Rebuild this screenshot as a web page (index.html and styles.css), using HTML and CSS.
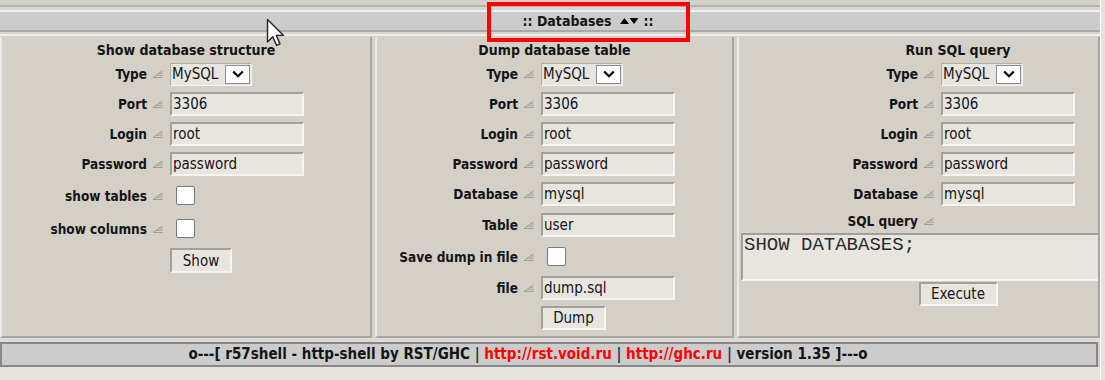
FILE: index.html
```html
<!DOCTYPE html>
<html>
<head>
<meta charset="utf-8">
<title>r57shell - Databases</title>
<link rel="stylesheet" href="styles.css">
</head>
<body>
<div class="screen">
  <div class="page">
    <div class="hdr-outer">
      <div class="hdr-frame">
        <div class="hdr">
          <span>:: Databases</span>
          <svg class="arrows" viewBox="0 0 19 8" width="19" height="8"><polygon points="0,7 9,7 4.5,1" fill="#000"/><polygon points="9.5,1 18.5,1 14,7" fill="#000"/></svg>
          <span>::</span>
        </div>
      </div>
    </div>

    <div class="cols">
      <div class="col">
        <div class="form f1">
          <div class="title">Show database structure</div>

          <div class="lbl">Type<svg class="ic" viewBox="0 0 11 8"><path d="M1 7.5H10.5M4 5.3H10.5M7 3.1H10.5M1 7.5L10.5 0.8" stroke="#a19e98" stroke-width="1" fill="none"/></svg></div>
          <div class="fld"><div class="sel"><span class="sel-txt">MySQL</span><span class="sel-btn"><svg viewBox="0 0 12 8" width="12" height="8"><path d="M1.2 1.5L6 6.3L10.8 1.5" stroke="#000" stroke-width="2.2" fill="none"/></svg></span></div></div>

          <div class="lbl">Port<svg class="ic" viewBox="0 0 11 8"><path d="M1 7.5H10.5M4 5.3H10.5M7 3.1H10.5M1 7.5L10.5 0.8" stroke="#a19e98" stroke-width="1" fill="none"/></svg></div>
          <div class="fld"><input class="inp" value="3306"></div>

          <div class="lbl">Login<svg class="ic" viewBox="0 0 11 8"><path d="M1 7.5H10.5M4 5.3H10.5M7 3.1H10.5M1 7.5L10.5 0.8" stroke="#a19e98" stroke-width="1" fill="none"/></svg></div>
          <div class="fld"><input class="inp" value="root"></div>

          <div class="lbl">Password<svg class="ic" viewBox="0 0 11 8"><path d="M1 7.5H10.5M4 5.3H10.5M7 3.1H10.5M1 7.5L10.5 0.8" stroke="#a19e98" stroke-width="1" fill="none"/></svg></div>
          <div class="fld"><input class="inp" value="password"></div>

          <div class="lbl">show tables<svg class="ic" viewBox="0 0 11 8"><path d="M1 7.5H10.5M4 5.3H10.5M7 3.1H10.5M1 7.5L10.5 0.8" stroke="#a19e98" stroke-width="1" fill="none"/></svg></div>
          <div class="fld"><input type="checkbox" class="chk"></div>

          <div class="lbl">show columns<svg class="ic" viewBox="0 0 11 8"><path d="M1 7.5H10.5M4 5.3H10.5M7 3.1H10.5M1 7.5L10.5 0.8" stroke="#a19e98" stroke-width="1" fill="none"/></svg></div>
          <div class="fld"><input type="checkbox" class="chk"></div>

          <div class="fld c2"><button class="btn b-show">Show</button></div>
        </div>
      </div>

      <div class="col">
        <div class="form f2">
          <div class="title">Dump database table</div>

          <div class="lbl">Type<svg class="ic" viewBox="0 0 11 8"><path d="M1 7.5H10.5M4 5.3H10.5M7 3.1H10.5M1 7.5L10.5 0.8" stroke="#a19e98" stroke-width="1" fill="none"/></svg></div>
          <div class="fld"><div class="sel"><span class="sel-txt">MySQL</span><span class="sel-btn"><svg viewBox="0 0 12 8" width="12" height="8"><path d="M1.2 1.5L6 6.3L10.8 1.5" stroke="#000" stroke-width="2.2" fill="none"/></svg></span></div></div>

          <div class="lbl">Port<svg class="ic" viewBox="0 0 11 8"><path d="M1 7.5H10.5M4 5.3H10.5M7 3.1H10.5M1 7.5L10.5 0.8" stroke="#a19e98" stroke-width="1" fill="none"/></svg></div>
          <div class="fld"><input class="inp" value="3306"></div>

          <div class="lbl">Login<svg class="ic" viewBox="0 0 11 8"><path d="M1 7.5H10.5M4 5.3H10.5M7 3.1H10.5M1 7.5L10.5 0.8" stroke="#a19e98" stroke-width="1" fill="none"/></svg></div>
          <div class="fld"><input class="inp" value="root"></div>

          <div class="lbl">Password<svg class="ic" viewBox="0 0 11 8"><path d="M1 7.5H10.5M4 5.3H10.5M7 3.1H10.5M1 7.5L10.5 0.8" stroke="#a19e98" stroke-width="1" fill="none"/></svg></div>
          <div class="fld"><input class="inp" value="password"></div>

          <div class="lbl">Database<svg class="ic" viewBox="0 0 11 8"><path d="M1 7.5H10.5M4 5.3H10.5M7 3.1H10.5M1 7.5L10.5 0.8" stroke="#a19e98" stroke-width="1" fill="none"/></svg></div>
          <div class="fld"><input class="inp" value="mysql"></div>

          <div class="lbl">Table<svg class="ic" viewBox="0 0 11 8"><path d="M1 7.5H10.5M4 5.3H10.5M7 3.1H10.5M1 7.5L10.5 0.8" stroke="#a19e98" stroke-width="1" fill="none"/></svg></div>
          <div class="fld"><input class="inp" value="user"></div>

          <div class="lbl">Save dump in file<svg class="ic" viewBox="0 0 11 8"><path d="M1 7.5H10.5M4 5.3H10.5M7 3.1H10.5M1 7.5L10.5 0.8" stroke="#a19e98" stroke-width="1" fill="none"/></svg></div>
          <div class="fld"><input type="checkbox" class="chk"></div>

          <div class="lbl">file<svg class="ic" viewBox="0 0 11 8"><path d="M1 7.5H10.5M4 5.3H10.5M7 3.1H10.5M1 7.5L10.5 0.8" stroke="#a19e98" stroke-width="1" fill="none"/></svg></div>
          <div class="fld"><input class="inp" value="dump.sql"></div>

          <div class="fld c2"><button class="btn b-dump">Dump</button></div>
        </div>
      </div>

      <div class="col">
        <div class="form f3">
          <div class="title">Run SQL query</div>

          <div class="lbl">Type<svg class="ic" viewBox="0 0 11 8"><path d="M1 7.5H10.5M4 5.3H10.5M7 3.1H10.5M1 7.5L10.5 0.8" stroke="#a19e98" stroke-width="1" fill="none"/></svg></div>
          <div class="fld"><div class="sel"><span class="sel-txt">MySQL</span><span class="sel-btn"><svg viewBox="0 0 12 8" width="12" height="8"><path d="M1.2 1.5L6 6.3L10.8 1.5" stroke="#000" stroke-width="2.2" fill="none"/></svg></span></div></div>

          <div class="lbl">Port<svg class="ic" viewBox="0 0 11 8"><path d="M1 7.5H10.5M4 5.3H10.5M7 3.1H10.5M1 7.5L10.5 0.8" stroke="#a19e98" stroke-width="1" fill="none"/></svg></div>
          <div class="fld"><input class="inp" value="3306"></div>

          <div class="lbl">Login<svg class="ic" viewBox="0 0 11 8"><path d="M1 7.5H10.5M4 5.3H10.5M7 3.1H10.5M1 7.5L10.5 0.8" stroke="#a19e98" stroke-width="1" fill="none"/></svg></div>
          <div class="fld"><input class="inp" value="root"></div>

          <div class="lbl">Password<svg class="ic" viewBox="0 0 11 8"><path d="M1 7.5H10.5M4 5.3H10.5M7 3.1H10.5M1 7.5L10.5 0.8" stroke="#a19e98" stroke-width="1" fill="none"/></svg></div>
          <div class="fld"><input class="inp" value="password"></div>

          <div class="lbl">Database<svg class="ic" viewBox="0 0 11 8"><path d="M1 7.5H10.5M4 5.3H10.5M7 3.1H10.5M1 7.5L10.5 0.8" stroke="#a19e98" stroke-width="1" fill="none"/></svg></div>
          <div class="fld"><input class="inp" value="mysql"></div>

          <div class="lbl">SQL query<svg class="ic" viewBox="0 0 11 8"><path d="M1 7.5H10.5M4 5.3H10.5M7 3.1H10.5M1 7.5L10.5 0.8" stroke="#a19e98" stroke-width="1" fill="none"/></svg></div>
          <div class="fld"></div>

          <textarea class="ta">SHOW DATABASES;</textarea>

          <div class="exec"><button class="btn b-exec">Execute</button></div>
        </div>
      </div>
    </div>

    <div class="sep"></div>
    <div class="foot"><span class="foot-txt">o---[ r57shell - http-shell by RST/GHC <span class="bar">|</span> <span class="red">http://rst.void.ru</span> <span class="bar">|</span> <span class="red">http://ghc.ru</span> <span class="bar">|</span> version 1.35 ]---o</span></div>
    <div class="below"></div>
  </div>
  <div class="vscroll"></div>
</div>

<div class="callout"></div>
<svg class="cursor" viewBox="0 0 20 30" width="20" height="30"><path d="M1.5 1.5V24L6.8 18.8L10.6 27.4L14 25.9L10.3 17.4H17.5Z" fill="#fff" stroke="#222" stroke-width="1.4" stroke-linejoin="round"/></svg>
</body>
</html>
```

FILE: styles.css
```css
html, body {
  margin: 0;
  padding: 0;
}
body {
  width: 1105px;
  height: 380px;
  overflow: hidden;
  position: relative;
  background: #d4d0c8;
  color: #141414;
  font-family: "DejaVu Sans Condensed", "DejaVu Sans", sans-serif;
  font-stretch: condensed;
}
.screen {
  display: flex;
  height: 380px;
}
.page {
  width: 1100px;
  flex: none;
  background: #d4d0c8;
}
.vscroll {
  flex: none;
  width: 4px;
  border-left: 1px solid #fbfbfa;
  background: #e4e2de;
}

/* header */
.hdr-outer {
  padding-top: 5px;
}
.hdr-frame {
  border-top: 2px solid #b5b2ac;
  border-bottom: 2px solid #efeeeb;
  padding: 3px 0 2px;
  margin-bottom: 1px;
  background: #d8d5cf;
}
.hdr {
  height: 18px;
  border-top: 2px solid #eef0f2;
  border-bottom: 2px solid #a9a9a9;
  background: #cccccc;
  display: flex;
  justify-content: center;
  align-items: center;
  padding-left: 76px;
  font-weight: bold;
  font-size: 14px;
  white-space: nowrap;
}
.arrows {
  margin: 0 4px 0 9px;
}

/* columns */
.cols {
  display: grid;
  grid-template-columns: 372px 359px 363px;
  column-gap: 3px;
  height: 301px;
}
.col {
  box-sizing: border-box;
  border-left: 2px solid #eceae6;
  border-right: 2px solid #a9a6a1;
  border-bottom: 2px solid #a9a6a1;
  overflow: hidden;
}
.form {
  display: grid;
  column-gap: 5px;
  align-items: center;
}
.f1 {
  grid-template-columns: 163px 1fr;
  grid-template-rows: 22px 30px 30px 30px 30px 33px 33px 31px;
}
.f2 {
  grid-template-columns: 159px 1fr;
  grid-template-rows: 22px 30px 30px 30px 30px 30px 31px 33px 30px 30px;
}
.f3 {
  width: 434px;
  margin-left: 2px;
  grid-template-columns: 195px 234px;
  grid-template-rows: 22px 30px 30px 30px 30px 30px 23px 50px 24px;
}
.title {
  grid-column: 1 / -1;
  text-align: center;
  font-weight: bold;
  font-size: 14px;
  padding-top: 3px;
  white-space: nowrap;
}
.lbl {
  display: flex;
  justify-content: flex-end;
  align-items: center;
  padding-right: 2px;
  font-weight: bold;
  font-size: 13.5px;
  white-space: nowrap;
}
.ic {
  width: 11px;
  height: 8px;
  margin-left: 5px;
  flex: none;
}
.fld {
  display: flex;
  align-items: center;
}
.c2 {
  grid-column: 2;
}

/* controls */
.inp {
  box-sizing: border-box;
  width: 134px;
  height: 24px;
  margin: 0;
  border: 2px solid;
  border-color: #a3a09a #f6f5f2 #f6f5f2 #a3a09a;
  background: #e8e5df;
  padding: 0 1px;
  font-family: inherit;
  font-stretch: condensed;
  font-size: 15px;
  color: #141420;
  outline: none;
}
.sel {
  box-sizing: border-box;
  width: 82px;
  height: 23px;
  display: flex;
  align-items: center;
  border: 1px solid;
  border-color: #b0ada7 #f6f5f2 #f6f5f2 #b0ada7;
  background: #e8e5df;
}
.sel-txt {
  flex: 1;
  padding-left: 1px;
  font-size: 15px;
  color: #141420;
}
.sel-btn {
  box-sizing: border-box;
  width: 25px;
  height: 19px;
  margin-right: 1px;
  background: #ffffff;
  border: 1px solid #8c8c8c;
  display: flex;
  align-items: center;
  justify-content: center;
}
.chk {
  appearance: none;
  -webkit-appearance: none;
  box-sizing: border-box;
  width: 19px;
  height: 19px;
  margin: 0 0 0 6px;
  border: 1px solid #7a7a7a;
  border-radius: 2px;
  background: #ffffff;
}
.btn {
  box-sizing: border-box;
  margin: 0;
  padding: 0;
  border: 2px solid;
  border-color: #a3a09a #f6f5f2 #f6f5f2 #a3a09a;
  background: #e8e5df;
  font-family: inherit;
  font-stretch: condensed;
  font-size: 15px;
  color: #141420;
}
.b-show { width: 62px; height: 25px; }
.b-dump { width: 65px; height: 24px; }
.b-exec { width: 79px; height: 24px; }
.ta {
  grid-column: 1 / -1;
  box-sizing: border-box;
  width: 434px;
  height: 48px;
  margin: 0;
  border: 2px solid;
  border-color: #a3a09a #f6f5f2 #f6f5f2 #a3a09a;
  background: #e8e5df;
  padding: 0 1px;
  font-family: "Liberation Mono", monospace;
  font-size: 19px;
  line-height: 21px;
  color: #2a2a2a;
  resize: none;
  overflow: hidden;
  outline: none;
}
.exec {
  grid-column: 1 / -1;
  justify-self: center;
  display: flex;
}

/* footer */
.sep {
  height: 4px;
  background: #dedbd5;
}
.foot {
  box-sizing: border-box;
  width: 1098px;
  height: 25px;
  border: 2px solid #878787;
  background: #cccccc;
  text-align: center;
  line-height: 21px;
  padding-right: 42px;
  font-weight: bold;
  font-size: 15px;
  white-space: nowrap;
}
.red {
  color: #ff0000;
}
.bar {
  color: #1e3450;
}
.below {
  height: 13px;
  background: #e6e3dd;
}

/* overlays */
.callout {
  position: absolute;
  left: 487px;
  top: 2px;
  width: 203px;
  height: 40px;
  box-sizing: border-box;
  border: 4px solid #ff0000;
}
.cursor {
  position: absolute;
  left: 266px;
  top: 18px;
}
```
